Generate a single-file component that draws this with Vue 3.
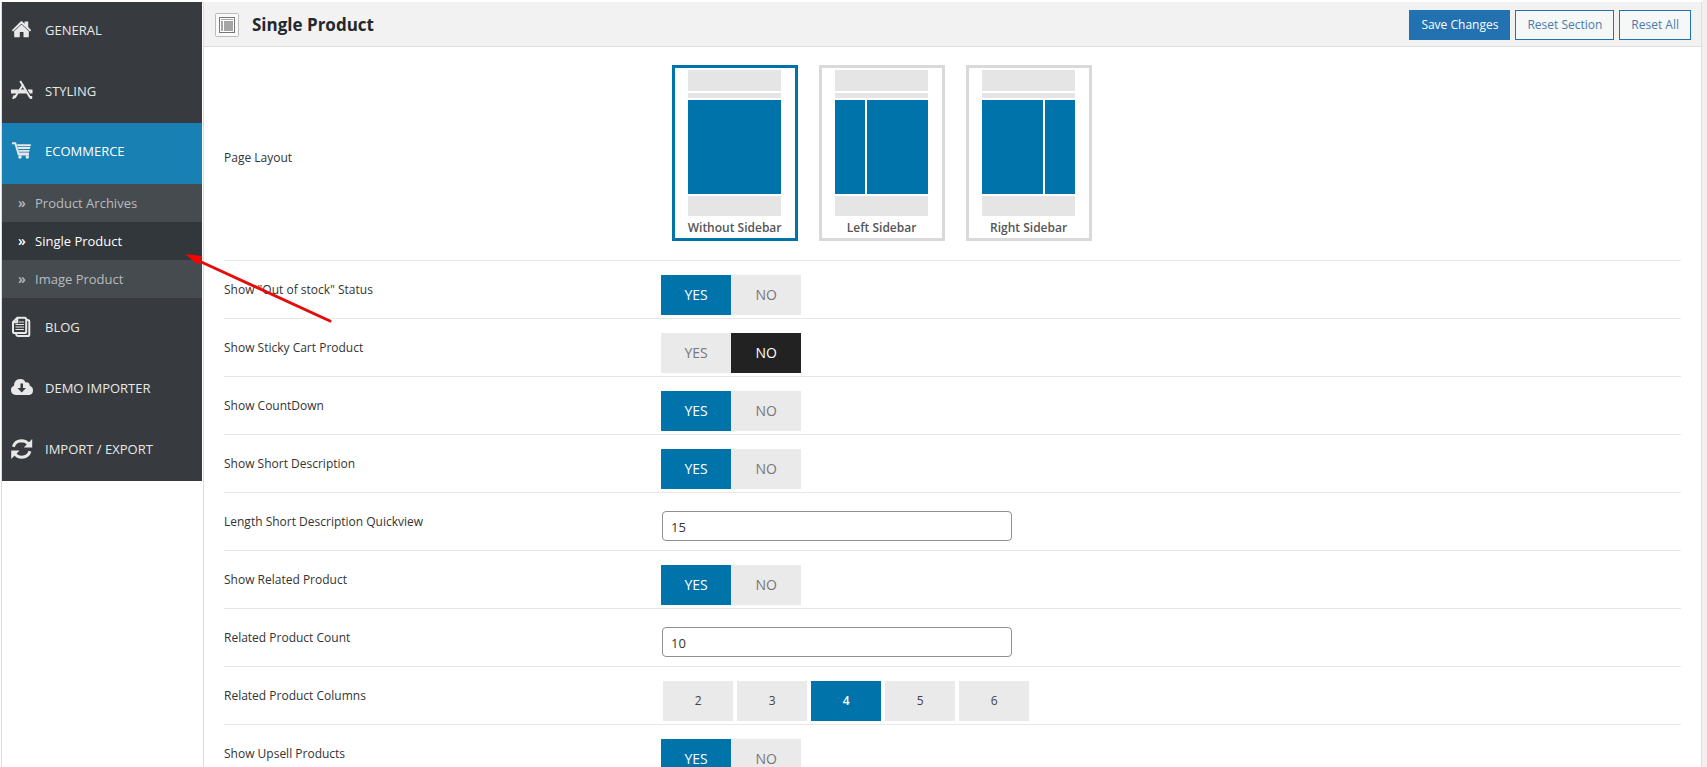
<template>
  <div class="page">
    <div class="panel">
      <nav class="side">
        <ul class="menu">
          <li v-for="item in menu" :key="item.label" class="menu__item">
            <a href="#" class="menu__link" :class="{ 'is-active': item.children }">
              <svg v-if="item.icon === 'home'" class="menu__icon" viewBox="0 0 22 22">
                <path d="M.8 11.200 9.600 2.600Q10.500 1.800 11.400 2.600L13.600 4.700V2.600H17.200v5.500L20.200 11.200 18.900 12.600 10.500 4.700 2.100 12.600z" />
                <path d="M10.500 5.500 17.800 12.200V18.300H12.500V13H8.800V18.300H3.200V12.200z" />
              </svg>
              <svg v-else-if="item.icon === 'tools'" class="menu__icon" viewBox="0 0 22 22">
                <path d="M0 9.500h7.800l-2.300 4H0zM16.500 9.500H21.500v4h-2.600zM9.300 9.500h4.200l2.200 4H7.200z" />
                <path d="M9.200 1 19.400 18M12.300 4.300 3.500 18M2 18.800l1.600-3.500M20.200 19v-3" class="line" />
              </svg>
              <svg v-else-if="item.icon === 'cart'" class="menu__icon" viewBox="0 0 22 22">
                <path d="M1 3.200h3.300l3.400 11.300h10.300" class="line" />
                <path d="M6 4.300h13.800v2H6.500zM6.700 7.100h12.600l-.4 2H7.200zM7.400 9.900h11.300l-.5 1.900H7.900zM8.100 12.500h9.900l-.4 1.500H8.500z" />
                <circle cx="9" cy="17" r="1.700" />
                <circle cx="16.300" cy="17" r="1.700" />
              </svg>
              <svg v-else-if="item.icon === 'docs'" class="menu__icon" viewBox="0 0 22 22">
                <path d="M6.300 1.800h7.300q1.600 0 1.600 1.600v12q0 1.600-1.600 1.600H3.600Q2 17 2 15.400V6.100zM6.300 2v4.200H2M15.500 4h1.200q1.600 0 1.600 1.600v12.800q0 1.600-1.600 1.600H6.800q-1.500 0-1.600-1.500V17.500" class="line" />
                <path d="M8 6h5M4.500 8.500H13M4.500 11H13M4.500 13.500H13" class="line line--thin" />
              </svg>
              <svg v-else-if="item.icon === 'cloud'" class="menu__icon" viewBox="0 0 22 22">
                <path fill-rule="evenodd" d="M4.800 18Q0 17.500 0 13 0 9.800 3 8.700 3 2.500 9 2q4-.3 5.600 3.400 4-.8 4.200 3.400 3.200 1.200 3.200 4.700 0 4-4 4.500zM9.500 6.500v4.500H6.500l4.200 4.500 4.300-4.500h-3V6.500z" />
              </svg>
              <svg v-else class="menu__icon" viewBox="0 0 22 22">
                <path d="M2.300 8.800Q4.300 3 10.500 2.800q4.500 0 7.200 3.600M19 13.200Q17 19 10.800 19.200q-4.500 0-7.200-3.600" class="line line--bold" />
                <path d="M21.200 1v8.400h-8.400zM.2 21v-8.400h8.400z" />
              </svg>
              <span>{{ item.label }}</span>
            </a>
            <ul v-if="item.children" class="sub">
              <li v-for="child in item.children" :key="child">
                <a href="#" class="sub__link" :class="{ 'is-current': child === current }">
                  <span class="sub__mark">»</span>{{ child }}
                </a>
              </li>
            </ul>
          </li>
        </ul>
      </nav>

      <main class="content">
        <header class="head">
          <svg class="head__icon" viewBox="0 0 24 24">
            <rect x=".5" y=".5" width="23" height="23" rx="1" fill="#fafafa" stroke="#bbb" />
            <rect x="4.500" y="4.500" width="15" height="15" fill="#fff" stroke="#777" />
            <path d="M6 6h12v1H6zM6 8h2v10H6zM9 8h9v10H9z" fill="#a5a5a5" />
          </svg>
          <h1 class="head__title">{{ current }}</h1>
          <button type="button" class="btn btn--primary">Save Changes</button>
          <button type="button" class="btn">Reset Section</button>
          <button type="button" class="btn">Reset All</button>
        </header>

        <form class="form" @submit.prevent>
          <div class="row row--layout" role="radiogroup" aria-labelledby="page-layout">
            <span id="page-layout" class="row__label">Page Layout</span>
            <div class="layouts">
              <label v-for="l in layouts" :key="l.id" class="layout" :class="{ 'is-on': layout === l.id }">
                <input v-model="layout" class="hidden" type="radio" name="layout" :value="l.id">
                <span class="layout__top"></span>
                <span class="layout__nav"></span>
                <span class="layout__body" :class="'layout__body--' + l.id">
                  <i v-for="n in l.parts" :key="n"></i>
                </span>
                <span class="layout__foot"></span>
                <span class="layout__name">{{ l.name }}</span>
              </label>
            </div>
          </div>

          <template v-for="f in fields" :key="f.id">
            <div v-if="f.type === 'text'" class="row">
              <label :for="f.id" class="row__label">{{ f.label }}</label>
              <input :id="f.id" v-model="f.value" type="text" class="text">
            </div>
            <div v-else class="row" role="radiogroup" :aria-labelledby="f.id">
              <span :id="f.id" class="row__label">{{ f.label }}</span>
              <div :class="f.type">
                <label
                  v-for="o in f.type === 'switch' ? ['YES', 'NO'] : columns"
                  :key="o"
                  class="opt"
                  :class="{ 'is-on': f.value === o, 'is-off': f.value === o && o === 'NO' }"
                >
                  <input v-model="f.value" class="hidden" type="radio" :name="f.id" :value="o">{{ o }}
                </label>
              </div>
            </div>
          </template>
        </form>
      </main>
    </div>

    <!-- pointer to the current section -->
    <svg class="arrow" viewBox="0 0 148 72" aria-hidden="true">
      <path d="M145 68 12 7" fill="none" stroke="#e60c0c" stroke-width="3" stroke-linecap="round" />
      <path d="M0 1 17 3 13 11.500z" fill="#f00" />
    </svg>
  </div>
</template>

<script setup>
import { ref, reactive } from 'vue'

const current = ref('Single Product')
const layout = ref('none')

const menu = [
  { label: 'GENERAL', icon: 'home' },
  { label: 'STYLING', icon: 'tools' },
  { label: 'ECOMMERCE', icon: 'cart', children: ['Product Archives', 'Single Product', 'Image Product'] },
  { label: 'BLOG', icon: 'docs' },
  { label: 'DEMO IMPORTER', icon: 'cloud' },
  { label: 'IMPORT / EXPORT', icon: 'sync' },
]

const layouts = [
  { id: 'none', name: 'Without Sidebar', parts: 1 },
  { id: 'left', name: 'Left Sidebar', parts: 2 },
  { id: 'right', name: 'Right Sidebar', parts: 2 },
]

const columns = ['2', '3', '4', '5', '6']

const fields = reactive([
  { id: 'stock', type: 'switch', label: 'Show "Out of stock" Status', value: 'YES' },
  { id: 'sticky', type: 'switch', label: 'Show Sticky Cart Product', value: 'NO' },
  { id: 'countdown', type: 'switch', label: 'Show CountDown', value: 'YES' },
  { id: 'short-desc', type: 'switch', label: 'Show Short Description', value: 'YES' },
  { id: 'length', type: 'text', label: 'Length Short Description Quickview', value: '15' },
  { id: 'related', type: 'switch', label: 'Show Related Product', value: 'YES' },
  { id: 'related-count', type: 'text', label: 'Related Product Count', value: '10' },
  { id: 'related-cols', type: 'choice', label: 'Related Product Columns', value: '4' },
  { id: 'upsell', type: 'switch', label: 'Show Upsell Products', value: 'YES' },
])
</script>

<style>
body {
  background: #fff;
}
</style>

<style scoped>
* {
  box-sizing: border-box;
}
.page {
  position: relative;
  display: flex;
  height: 100vh;
  overflow: hidden;
  padding: 2px 0 0 1px;
  border-right: 5px solid #f0f0f1;
  font-family: "Open Sans", "Noto Sans", sans-serif;
  font-size: 12px;
  line-height: 18px;
  color: #333;
}
.panel {
  flex: 1;
  display: flex;
  gap: 1px;
  border: solid #ddd;
  border-width: 0 1px;
}

/* sidebar */
.side {
  flex: 0 0 200px;
}
.menu,
.sub {
  list-style: none;
  margin: 0;
  padding: 0;
}
.menu {
  background: #373b3f;
}
.menu__item + .menu__item {
  padding-top: 1px;
}
.menu__link {
  display: flex;
  align-items: center;
  gap: 12px;
  height: 60px;
  padding: 0 9px 5px;
  font-size: 13px;
  color: #e8e8e8;
  text-decoration: none;
}
.menu__link.is-active {
  margin-top: -1px;
  height: 61px;
  background: #1880b2;
  color: #fff;
}
.menu__icon {
  width: 22px;
  height: 22px;
  fill: #e8e8e8;
}
.line {
  fill: none;
  stroke: #e8e8e8;
  stroke-width: 2;
}
.line--thin {
  stroke-width: 1;
}
.line--bold {
  stroke-width: 3;
}
.sub__link {
  display: flex;
  align-items: center;
  height: 38px;
  padding-left: 16px;
  background: #464b4f;
  font-size: 13px;
  color: #b8bcbf;
  text-decoration: none;
}
.sub__mark {
  width: 17px;
  font-size: 14px;
  font-weight: 600;
}
.sub__link.is-current {
  background: #32373b;
  color: #fff;
}

/* header */
.content {
  flex: 1;
  min-width: 0;
  border-left: 1px solid #ddd;
}
.head {
  display: flex;
  align-items: center;
  gap: 5px;
  height: 45px;
  padding: 2px 10px 0 11px;
  border-bottom: 1px solid #ddd;
  background: #f2f2f2;
}
.head__icon {
  width: 24px;
  height: 24px;
}
.head__title {
  flex: 1;
  margin: 0;
  padding-left: 8px;
  font-size: 17px;
  font-weight: 700;
  line-height: 24px;
  color: #23282d;
}
.btn {
  height: 30px;
  padding: 0 11px;
  border: 1px solid #2271b1;
  background: #f6f7f7;
  font: inherit;
  color: #4a7cab;
}
.btn--primary {
  background: #2271b1;
  color: #fff;
}

/* option rows */
.form {
  padding: 8px 20px 0;
}
.row {
  display: grid;
  grid-template-columns: 30% 1fr;
  align-items: center;
  height: 58px;
  border-bottom: 1px solid #e7e7e7;
}
.row--layout {
  height: auto;
}
.layouts {
  display: flex;
  gap: 21px;
  padding: 10px 0 19px 11px;
}
.layout {
  display: flex;
  flex-direction: column;
  gap: 2px;
  width: 126px;
  height: 176px;
  padding: 2px 14px 0 13px;
  border: 3px solid #d9d9d9;
}
.layout.is-on {
  border-color: #0073aa;
}
.layout__top {
  height: 21px;
  background: #e5e5e5;
}
.layout__nav {
  height: 5px;
  background: #e5e5e5;
}
.layout__body {
  display: flex;
  gap: 2px;
  height: 94px;
}
.layout__body i {
  flex: 1;
  background: #0073aa;
}
.layout__body--left i:first-child,
.layout__body--right i:last-child {
  flex: 0 0 30px;
}
.layout__foot {
  height: 20px;
  background: #e5e5e5;
}
.layout__name {
  display: flex;
  justify-content: center;
  padding-top: 1px;
  font-weight: 600;
  white-space: nowrap;
  color: #555;
}
.hidden {
  position: absolute;
  opacity: 0;
  pointer-events: none;
}
.switch,
.choice {
  display: flex;
  padding-top: 10px;
}
.choice {
  gap: 4px;
  padding-left: 2px;
}
.opt {
  display: flex;
  align-items: center;
  justify-content: center;
  width: 70px;
  height: 40px;
  background: #eaeaea;
  color: #444;
}
.switch .opt {
  font-size: 14px;
  color: #777;
}
.opt.is-on {
  background: #0073aa;
  color: #fff;
}
.choice .is-on {
  font-weight: 600;
}
.opt.is-off {
  background: #222;
}
.switch .opt.is-on {
  color: #fff;
}
.text {
  width: 350px;
  height: 30px;
  margin: 9px 0 0 1px;
  padding: 1px 8px 0;
  border: 1px solid #8c8f94;
  border-radius: 4px;
  background: #fff;
  font: inherit;
  font-size: 13px;
  color: #333;
}

.arrow {
  position: absolute;
  left: 185px;
  top: 253px;
  width: 148px;
  height: 72px;
  pointer-events: none;
}
</style>
